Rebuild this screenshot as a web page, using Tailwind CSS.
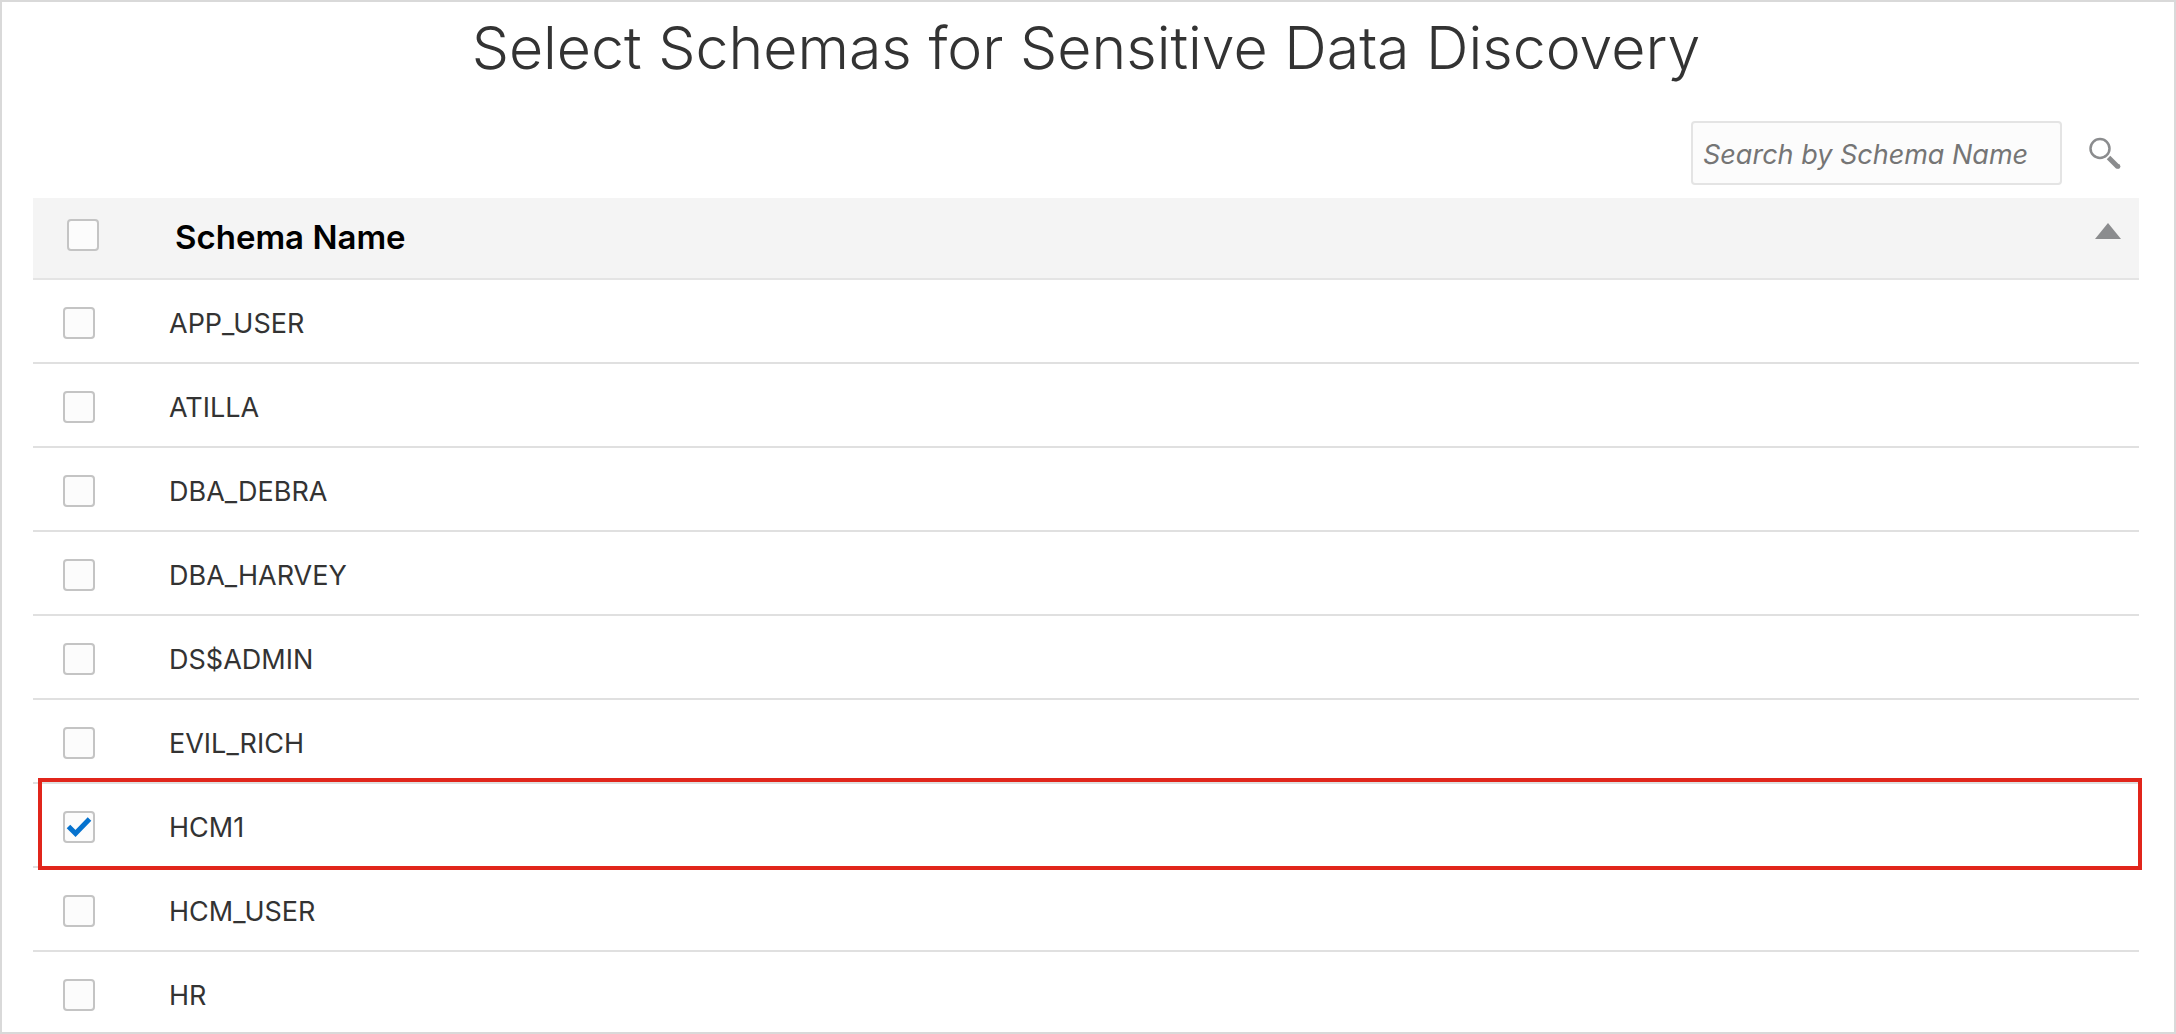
<!DOCTYPE html>
<html lang="en">
<head>
<meta charset="utf-8">
<meta name="viewport" content="width=device-width, initial-scale=1">
<title>Select Schemas for Sensitive Data Discovery</title>
<script src="https://cdn.jsdelivr.net/npm/@tailwindcss/browser@4"></script>
</head>
<body class="bg-white font-['Inter',sans-serif] text-[#333333]">
<main class="min-h-screen border-2 border-[#d9d9d9] pl-[31px] pr-[35px]">
  <h1 class="text-center text-[59px] leading-[92px] font-[350]">Select Schemas for Sensitive Data Discovery</h1>

  <form class="flex items-center justify-end gap-[27px] pt-[27px] pr-[18px] pb-[13px]">
    <input type="text" aria-label="Search by Schema Name" placeholder="Search by Schema Name" class="h-16 w-[371px] rounded-sm border-2 border-[#e4e4e4] bg-[#fcfcfc] px-2.5 pt-0.5 text-[27px] italic placeholder:text-[#757575]">
    <button type="button" aria-label="Search" class="size-8">
      <svg viewBox="0 0 32 32" class="size-8" fill="none" stroke="#8b8c8e">
        <circle cx="11" cy="11.500" r="9.500" stroke-width="2.500"/>
        <path d="M19.500 20.500L29 30" stroke-width="5"/>
        <circle cx="29" cy="29.500" r="2.400" fill="#8b8c8e" stroke="none"/>
      </svg>
    </button>
  </form>

  <table class="w-full table-fixed border-separate border-spacing-0 text-left text-[27px] leading-[40px]">
    <colgroup><col class="w-[136px]"><col></colgroup>
    <thead>
      <tr>
        <th class="h-[82px] border-b-2 border-[#e4e4e4] bg-[#f4f4f4] pt-[21px] pl-[34px] align-top"><input type="checkbox" aria-label="Select all schemas" class="block size-8 appearance-none rounded-sm border-2 border-[#c4c4c4] bg-[#fcfcfc]"></th>
        <th class="h-[82px] border-b-2 border-[#e4e4e4] bg-[#f4f4f4] pt-[19px] pr-[18px] pl-1.5 align-top text-[33px] font-semibold text-black">
          <div class="flex justify-between">
            <span>Schema Name</span>
            <button type="button" aria-label="Sort by schema name" class="mt-1.5 h-4 w-[26px]"><svg viewBox="0 0 26 16" class="h-4 w-[26px]"><path d="M13 0L26 16H0Z" fill="#8b8c8e"/></svg></button>
          </div>
        </th>
      </tr>
    </thead>
    <tbody>
      <tr class="align-top"><td class="h-[84px] border-b-2 border-[#e0e0e0] pt-[27px] pl-[30px]"><input id="s1" type="checkbox" class="block size-8 appearance-none rounded-sm border-2 border-[#c4c4c4] bg-[#fcfcfc]"></td><td class="border-b-2 border-[#e0e0e0] pt-6"><label for="s1">APP_USER</label></td></tr>
      <tr class="align-top"><td class="h-[84px] border-b-2 border-[#e0e0e0] pt-[27px] pl-[30px]"><input id="s2" type="checkbox" class="block size-8 appearance-none rounded-sm border-2 border-[#c4c4c4] bg-[#fcfcfc]"></td><td class="border-b-2 border-[#e0e0e0] pt-6"><label for="s2">ATILLA</label></td></tr>
      <tr class="align-top"><td class="h-[84px] border-b-2 border-[#e0e0e0] pt-[27px] pl-[30px]"><input id="s3" type="checkbox" class="block size-8 appearance-none rounded-sm border-2 border-[#c4c4c4] bg-[#fcfcfc]"></td><td class="border-b-2 border-[#e0e0e0] pt-6"><label for="s3">DBA_DEBRA</label></td></tr>
      <tr class="align-top"><td class="h-[84px] border-b-2 border-[#e0e0e0] pt-[27px] pl-[30px]"><input id="s4" type="checkbox" class="block size-8 appearance-none rounded-sm border-2 border-[#c4c4c4] bg-[#fcfcfc]"></td><td class="border-b-2 border-[#e0e0e0] pt-6"><label for="s4">DBA_HARVEY</label></td></tr>
      <tr class="align-top"><td class="h-[84px] border-b-2 border-[#e0e0e0] pt-[27px] pl-[30px]"><input id="s5" type="checkbox" class="block size-8 appearance-none rounded-sm border-2 border-[#c4c4c4] bg-[#fcfcfc]"></td><td class="border-b-2 border-[#e0e0e0] pt-6"><label for="s5">DS$ADMIN</label></td></tr>
      <tr class="align-top"><td class="h-[84px] border-b-2 border-[#e0e0e0] pt-[27px] pl-[30px]"><input id="s6" type="checkbox" class="block size-8 appearance-none rounded-sm border-2 border-[#c4c4c4] bg-[#fcfcfc]"></td><td class="border-b-2 border-[#e0e0e0] pt-6"><label for="s6">EVIL_RICH</label></td></tr>
      <!-- Highlighted row: a red outline lies over the row and its borders -->
      <tr class="relative align-top"><td class="h-[84px] border-b-2 border-[#e0e0e0] pt-[27px] pl-[30px]">
        <span class="grid size-8">
          <input id="s7" type="checkbox" checked class="peer col-start-1 row-start-1 size-8 appearance-none rounded-sm border-2 border-[#c4c4c4] bg-[#fcfcfc]">
          <svg viewBox="0 0 32 32" class="pointer-events-none invisible col-start-1 row-start-1 size-8 peer-checked:visible" fill="none" stroke="#0572ce" stroke-width="5" aria-hidden="true"><path d="M5.500 15.500L12.500 22.500L26.500 8"/></svg>
        </span>
        <span class="pointer-events-none absolute -top-1.5 -right-[3px] -bottom-0.5 left-[5px] border-4 border-[#e1251b]"></span>
      </td><td class="border-b-2 border-[#e0e0e0] pt-6"><label for="s7">HCM1</label></td></tr>
      <tr class="align-top"><td class="h-[84px] border-b-2 border-[#e0e0e0] pt-[27px] pl-[30px]"><input id="s8" type="checkbox" class="block size-8 appearance-none rounded-sm border-2 border-[#c4c4c4] bg-[#fcfcfc]"></td><td class="border-b-2 border-[#e0e0e0] pt-6"><label for="s8">HCM_USER</label></td></tr>
      <tr class="align-top"><td class="h-20 pt-[27px] pl-[30px]"><input id="s9" type="checkbox" class="block size-8 appearance-none rounded-sm border-2 border-[#c4c4c4] bg-[#fcfcfc]"></td><td class="pt-6"><label for="s9">HR</label></td></tr>
    </tbody>
  </table>
</main>
</body>
</html>
